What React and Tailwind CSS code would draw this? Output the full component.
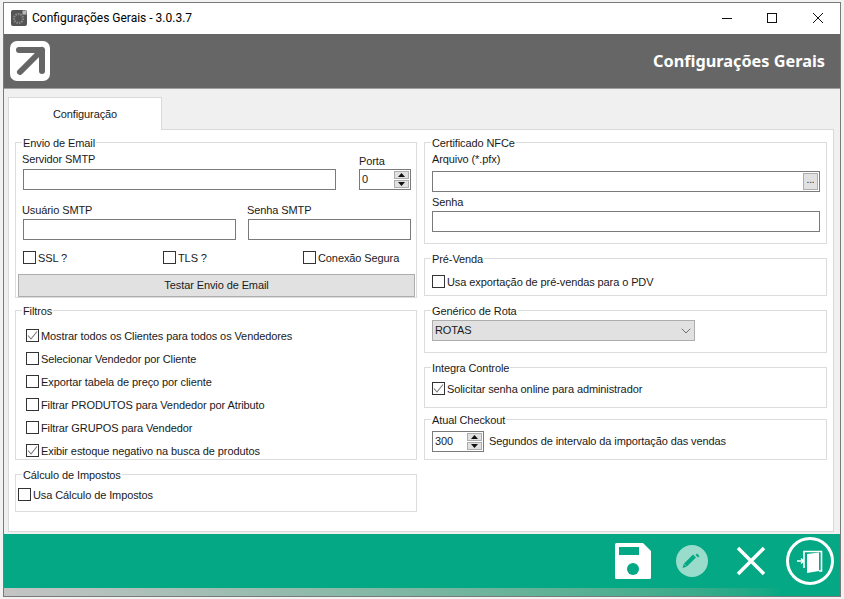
import { ChevronDown } from "lucide-react";

const font = "font-['Liberation_Sans','Noto_Sans',sans-serif]";

function Group({ title, className, children }) {
  return (
    <fieldset className={`border border-[#dcdcdc] ${className}`}>
      <legend className="ml-[6px] h-[14px] px-px text-[11px] leading-[16px]">{title}</legend>
      {children}
    </fieldset>
  );
}

function Check({ label, checked, className }) {
  return (
    <div className={`flex h-[13px] items-center ${className || ""}`}>
      <span className="flex h-[13px] w-[13px] shrink-0 items-center justify-center border border-[#333] bg-white">
        {checked && (
          <svg width="11" height="11" viewBox="0 0 11 11" fill="none">
            <path d="M1 5.5 L4 9 L10 1.5" stroke="#777" strokeWidth="1.1" />
          </svg>
        )}
      </span>
      <span className="ml-[2px] whitespace-nowrap text-[11px] leading-[14px]">{label}</span>
    </div>
  );
}

function Input({ className }) {
  return <div className={`h-[21px] border border-[#7a7a7a] bg-white ${className}`} />;
}

function SpinButton({ up }) {
  return (
    <span className="flex h-[8px] w-[15px] items-center justify-center border border-[#adadad] bg-[#e1e1e1]">
      <svg width="7" height="4" viewBox="0 0 7 4">
        <path d={up ? "M3.5 0 L7 4 L0 4 Z" : "M0 0 L7 0 L3.5 4 Z"} fill="#111" />
      </svg>
    </span>
  );
}

function Spinner({ value }) {
  return (
    <div className="flex h-[21px] w-[52px] items-center justify-between border border-[#7a7a7a] bg-white pl-[2px] pr-px text-[11px]">
      <span>{value}</span>
      <div className="flex flex-col gap-[1px]">
        <SpinButton up />
        <SpinButton />
      </div>
    </div>
  );
}

export default function App() {
  return (
    <div className={`h-[599px] w-[844px] overflow-hidden bg-[#f2f2f2] pb-[2px] pl-[3px] pr-[3px] pt-[2px] tracking-[-0.1px] text-[#1a1a1a] ${font}`}>
      <div className="flex h-full flex-col border border-[#7a7a7a] bg-[#f0f0f0]">
        {/* barra de titulo */}
        <div className="flex h-[31px] shrink-0 items-center bg-white pb-[2px] pl-[7px] pr-[17px]">
          <svg width="16" height="16" viewBox="0 0 16 16">
            <rect x="0" y="0" width="16" height="16" rx="2" fill="#555" />
            <circle cx="7.5" cy="8.5" r="4.5" fill="none" stroke="#8a8a8a" strokeWidth="2.2" strokeDasharray="1.5 1" />
            <rect x="11.5" y="0.5" width="4" height="4" fill="#bbb" />
          </svg>
          <span className="ml-[5px] font-['Roboto',sans-serif] text-[12px] tracking-normal text-black">Configurações Gerais - 3.0.3.7</span>
          <div className="ml-auto flex items-center">
            <svg width="10" height="10" viewBox="0 0 10 10"><path d="M0 5.5H10" stroke="#111" /></svg>
            <svg className="ml-[35px]" width="10" height="10" viewBox="0 0 10 10"><rect x="0.5" y="0.5" width="9" height="9" fill="none" stroke="#111" /></svg>
            <svg className="ml-[36px]" width="10" height="10" viewBox="0 0 10 10"><path d="M0 0L10 10M10 0L0 10" stroke="#111" /></svg>
          </div>
        </div>

        {/* cabecalho */}
        <div className="flex h-[55px] shrink-0 items-center justify-between border-b border-[#a0a0a0] bg-[#666666] pl-[6px] pr-[15px]">
          <svg width="40" height="40" viewBox="0 0 40 40">
            <rect width="40" height="40" rx="7" fill="#fff" />
            <path d="M9 9 H32 V30 M32 9 L10 31" fill="none" stroke="#666" strokeWidth="6" strokeLinecap="round" strokeLinejoin="round" />
          </svg>
          <span className="font-['Noto_Sans',sans-serif] text-[16.3px] font-bold tracking-normal text-white">Configurações Gerais</span>
        </div>

        {/* corpo */}
        <div className="flex-1 pl-[4px] pt-[8px]">
          <div className="relative z-10 -mb-px flex h-[33px] w-[154px] items-center justify-center border border-b-0 border-[#d9d9d9] bg-white text-[11px]">
            Configuração
          </div>
          <div className="flex h-[403px] w-[826px] gap-[7px] border border-[#d9d9d9] bg-white pl-[6px] pt-[5px]">
            <div className="w-[402px] shrink-0">
              <Group title="Envio de Email" className="h-[163px]">
                <div className="flex pl-[7px]">
                  <div className="mt-[3px] w-[313px]">
                    <div className="-ml-px h-[14px] text-[11px] leading-[14px]">Servidor SMTP</div>
                    <Input className="mt-[3px] w-[313px]" />
                  </div>
                  <div className="ml-[23px] mt-[5px]">
                    <div className="h-[14px] text-[11px] leading-[14px]">Porta</div>
                    <div className="mt-px"><Spinner value="0" /></div>
                  </div>
                </div>
                <div className="mt-[13px] flex gap-[12px] pl-[7px]">
                  <div>
                    <div className="-ml-px h-[14px] text-[11px] leading-[14px]">Usuário SMTP</div>
                    <Input className="mt-[2px] w-[213px]" />
                  </div>
                  <div>
                    <div className="-ml-px h-[14px] text-[11px] leading-[14px]">Senha SMTP</div>
                    <Input className="mt-[2px] w-[163px]" />
                  </div>
                </div>
                <div className="mt-[11px] flex pl-[7px]">
                  <Check label="SSL ?" className="w-[140px]" />
                  <Check label="TLS ?" className="w-[140px]" />
                  <Check label="Conexão Segura" />
                </div>
                <div className="ml-[2px] mt-[10px] flex h-[23px] w-[397px] items-center justify-center border border-[#adadad] bg-[#e1e1e1] text-[11px]">
                  Testar Envio de Email
                </div>
              </Group>

              <Group title="Filtros" className="mt-[5px] h-[157px]">
                <div className="mt-[12px] flex flex-col gap-[10px] pl-[10px]">
                  <Check checked label="Mostrar todos os Clientes para todos os Vendedores" />
                  <Check label="Selecionar Vendedor por Cliente" />
                  <Check label="Exportar tabela de preço por cliente" />
                  <Check label="Filtrar PRODUTOS para Vendedor por Atributo" />
                  <Check label="Filtrar GRUPOS para Vendedor" />
                  <Check checked label="Exibir estoque negativo na busca de produtos" />
                </div>
              </Group>

              <Group title="Cálculo de Impostos" className="mt-[7px] h-[45px]">
                <Check label="Usa Cálculo de Impostos" className="ml-[2px] mt-[7px]" />
              </Group>
            </div>

            <div className="w-[403px] shrink-0">
              <Group title="Certificado NFCe" className="h-[109px]">
                <div className="pl-[7px]">
                  <div className="mt-[3px] h-[14px] text-[11px] leading-[14px]">Arquivo (*.pfx)</div>
                  <div className="mt-[5px] flex h-[21px] w-[388px] items-center justify-end border border-[#7a7a7a] bg-white pr-px">
                    <span className="flex h-[17px] w-[15px] items-center justify-center border border-[#adadad] bg-[#e1e1e1] pb-[4px] text-[10px] leading-none">...</span>
                  </div>
                  <div className="mt-[3px] h-[14px] text-[11px] leading-[14px]">Senha</div>
                  <Input className="mt-[2px] w-[388px]" />
                </div>
              </Group>

              <Group title="Pré-Venda" className="mt-[7px] h-[45px]">
                <Check label="Usa exportação de pré-vendas para o PDV" className="ml-[7px] mt-[10px]" />
              </Group>

              <Group title="Genérico de Rota" className="mt-[7px] h-[50px]">
                <div className="ml-[7px] mt-[3px] flex h-[21px] w-[263px] items-center justify-between border border-[#adadad] bg-[#e1e1e1] pl-[2px] text-[11px]">
                  <span>ROTAS</span>
                  <ChevronDown size={16} strokeWidth={1.1} color="#444" />
                </div>
              </Group>

              <Group title="Integra Controle" className="mt-[7px] h-[48px]">
                <Check checked label="Solicitar senha online para administrador" className="ml-[7px] mt-[8px]" />
              </Group>

              <Group title="Atual Checkout" className="mt-[4px] h-[48px]">
                <div className="ml-[7px] mt-[5px] flex items-center">
                  <Spinner value="300" />
                  <span className="ml-[5px] whitespace-nowrap text-[11px]">Segundos de intervalo da importação das vendas</span>
                </div>
              </Group>
            </div>
          </div>
        </div>

        {/* rodape */}
        <div className="flex h-[62px] shrink-0 flex-col bg-[#04a884]">
          <div className="flex h-[54px] items-center justify-end pr-[6px]">
            <svg width="36" height="36" viewBox="0 0 36 36">
              <path d="M1.5 0 H28 L36 8 V34.5 A1.5 1.5 0 0 1 34.5 36 H1.5 A1.5 1.5 0 0 1 0 34.5 V1.5 A1.5 1.5 0 0 1 1.5 0 Z" fill="#fff" />
              <rect x="4" y="4" width="20" height="8" fill="#04a884" />
              <circle cx="18" cy="26" r="6" fill="#04a884" />
            </svg>
            <svg className="ml-[24px]" width="34" height="34" viewBox="0 0 34 34">
              <circle cx="17" cy="17" r="16" fill="#99dccb" />
              <path d="M10.5 21 L19.5 12" stroke="#04a884" strokeWidth="4" />
              <path d="M7.5 24 L8.8 19.8 L11.7 22.7 Z" fill="#04a884" />
              <path d="M20.5 11 L22 9.5 L24.5 12 L23 13.5 Z" fill="#04a884" />
            </svg>
            <svg className="ml-[27px]" width="30" height="30" viewBox="0 0 30 30">
              <path d="M2 2 L28 28 M28 2 L2 28" stroke="#fff" strokeWidth="3.5" />
            </svg>
            <svg className="ml-[20px]" width="48" height="48" viewBox="0 0 48 48">
              <circle cx="24" cy="24" r="22.5" fill="none" stroke="#fff" strokeWidth="3" />
              <path d="M18 31 V14.5 H35.5 V34 H33" fill="none" stroke="#fff" strokeWidth="1.6" />
              <path d="M21 17 L33 15.5 V34 L21 36 Z" fill="#fff" />
              <path d="M11 24 H17 M15 21.5 L17.5 24 L15 26.5" fill="none" stroke="#fff" strokeWidth="1.4" />
            </svg>
          </div>
          <div className="h-[8px] bg-linear-to-r from-[#c4c4c4] to-[#04a884] to-[93%]" />
        </div>
      </div>
    </div>
  );
}
